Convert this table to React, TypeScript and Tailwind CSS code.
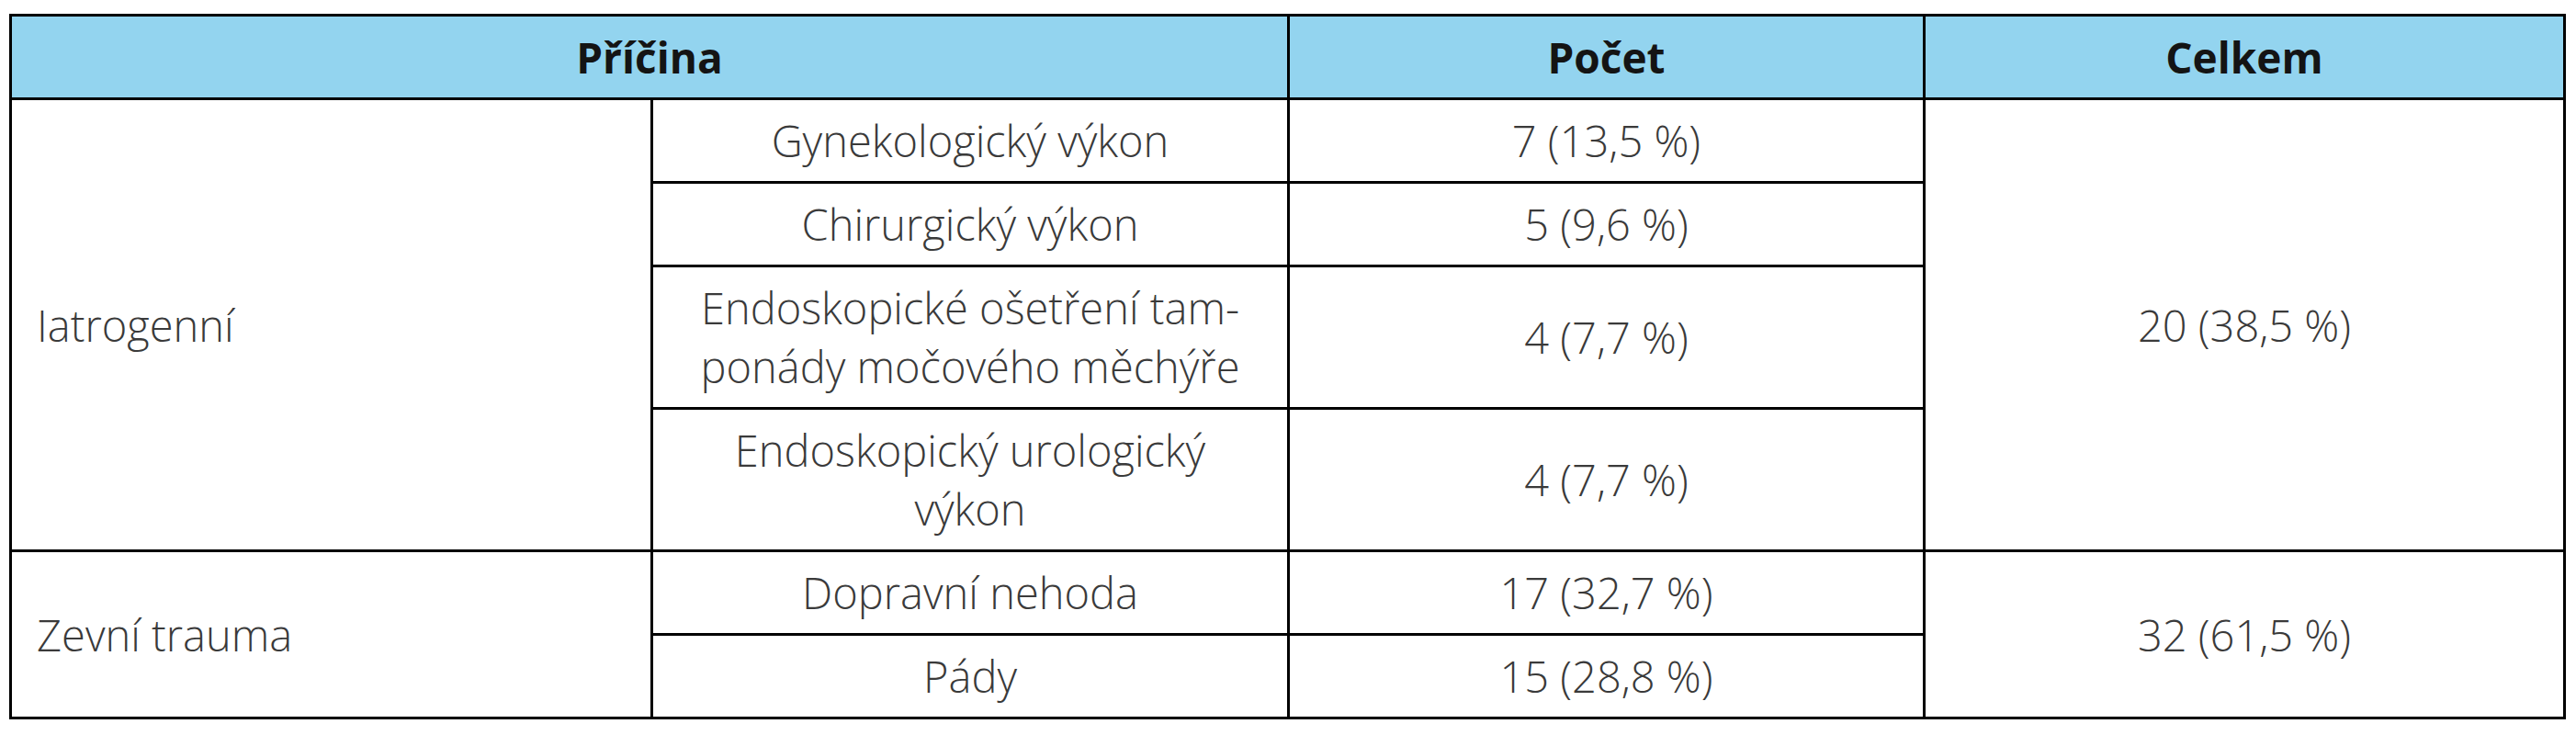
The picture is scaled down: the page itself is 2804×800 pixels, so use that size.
import React from "react";

const cell = "border-[3px] border-black align-middle py-[12px] leading-[64px]";
const body = `${cell} text-center text-[#3a3a3a] font-light`;
const side = `${cell} text-left pl-[27px] text-[#3a3a3a] font-light`;

export default function App() {
  return (
    <div className="w-[2804px] h-[800px] bg-white pt-[15px] pl-[10px] font-['Open_Sans',sans-serif] text-[47px]">
      <table className="table-fixed border-collapse w-[2780px]">
        <colgroup>
          <col className="w-[698px]" />
          <col className="w-[693px]" />
          <col className="w-[692px]" />
          <col className="w-[697px]" />
        </colgroup>
        <thead>
          <tr className="bg-[#93d4ef] text-[#141414] font-bold text-[46px]">
            <th colSpan={2} className={`${cell} text-center`}>Příčina</th>
            <th className={`${cell} text-center`}>Počet</th>
            <th className={`${cell} text-center`}>Celkem</th>
          </tr>
        </thead>
        <tbody>
          <tr>
            <td rowSpan={4} className={side}>Iatrogenní</td>
            <td className={body}>Gynekologický výkon</td>
            <td className={body}>7 (13,5 %)</td>
            <td rowSpan={4} className={body}>20 (38,5 %)</td>
          </tr>
          <tr>
            <td className={body}>Chirurgický výkon</td>
            <td className={body}>5 (9,6 %)</td>
          </tr>
          <tr>
            <td className={body}>
              Endoskopické ošetření tam-
              <br />
              ponády močového měchýře
            </td>
            <td className={body}>4 (7,7 %)</td>
          </tr>
          <tr>
            <td className={body}>
              Endoskopický urologický
              <br />
              výkon
            </td>
            <td className={body}>4 (7,7 %)</td>
          </tr>
          <tr>
            <td rowSpan={2} className={side}>Zevní trauma</td>
            <td className={body}>Dopravní nehoda</td>
            <td className={body}>17 (32,7 %)</td>
            <td rowSpan={2} className={body}>32 (61,5 %)</td>
          </tr>
          <tr>
            <td className={body}>Pády</td>
            <td className={body}>15 (28,8 %)</td>
          </tr>
        </tbody>
      </table>
    </div>
  );
}
